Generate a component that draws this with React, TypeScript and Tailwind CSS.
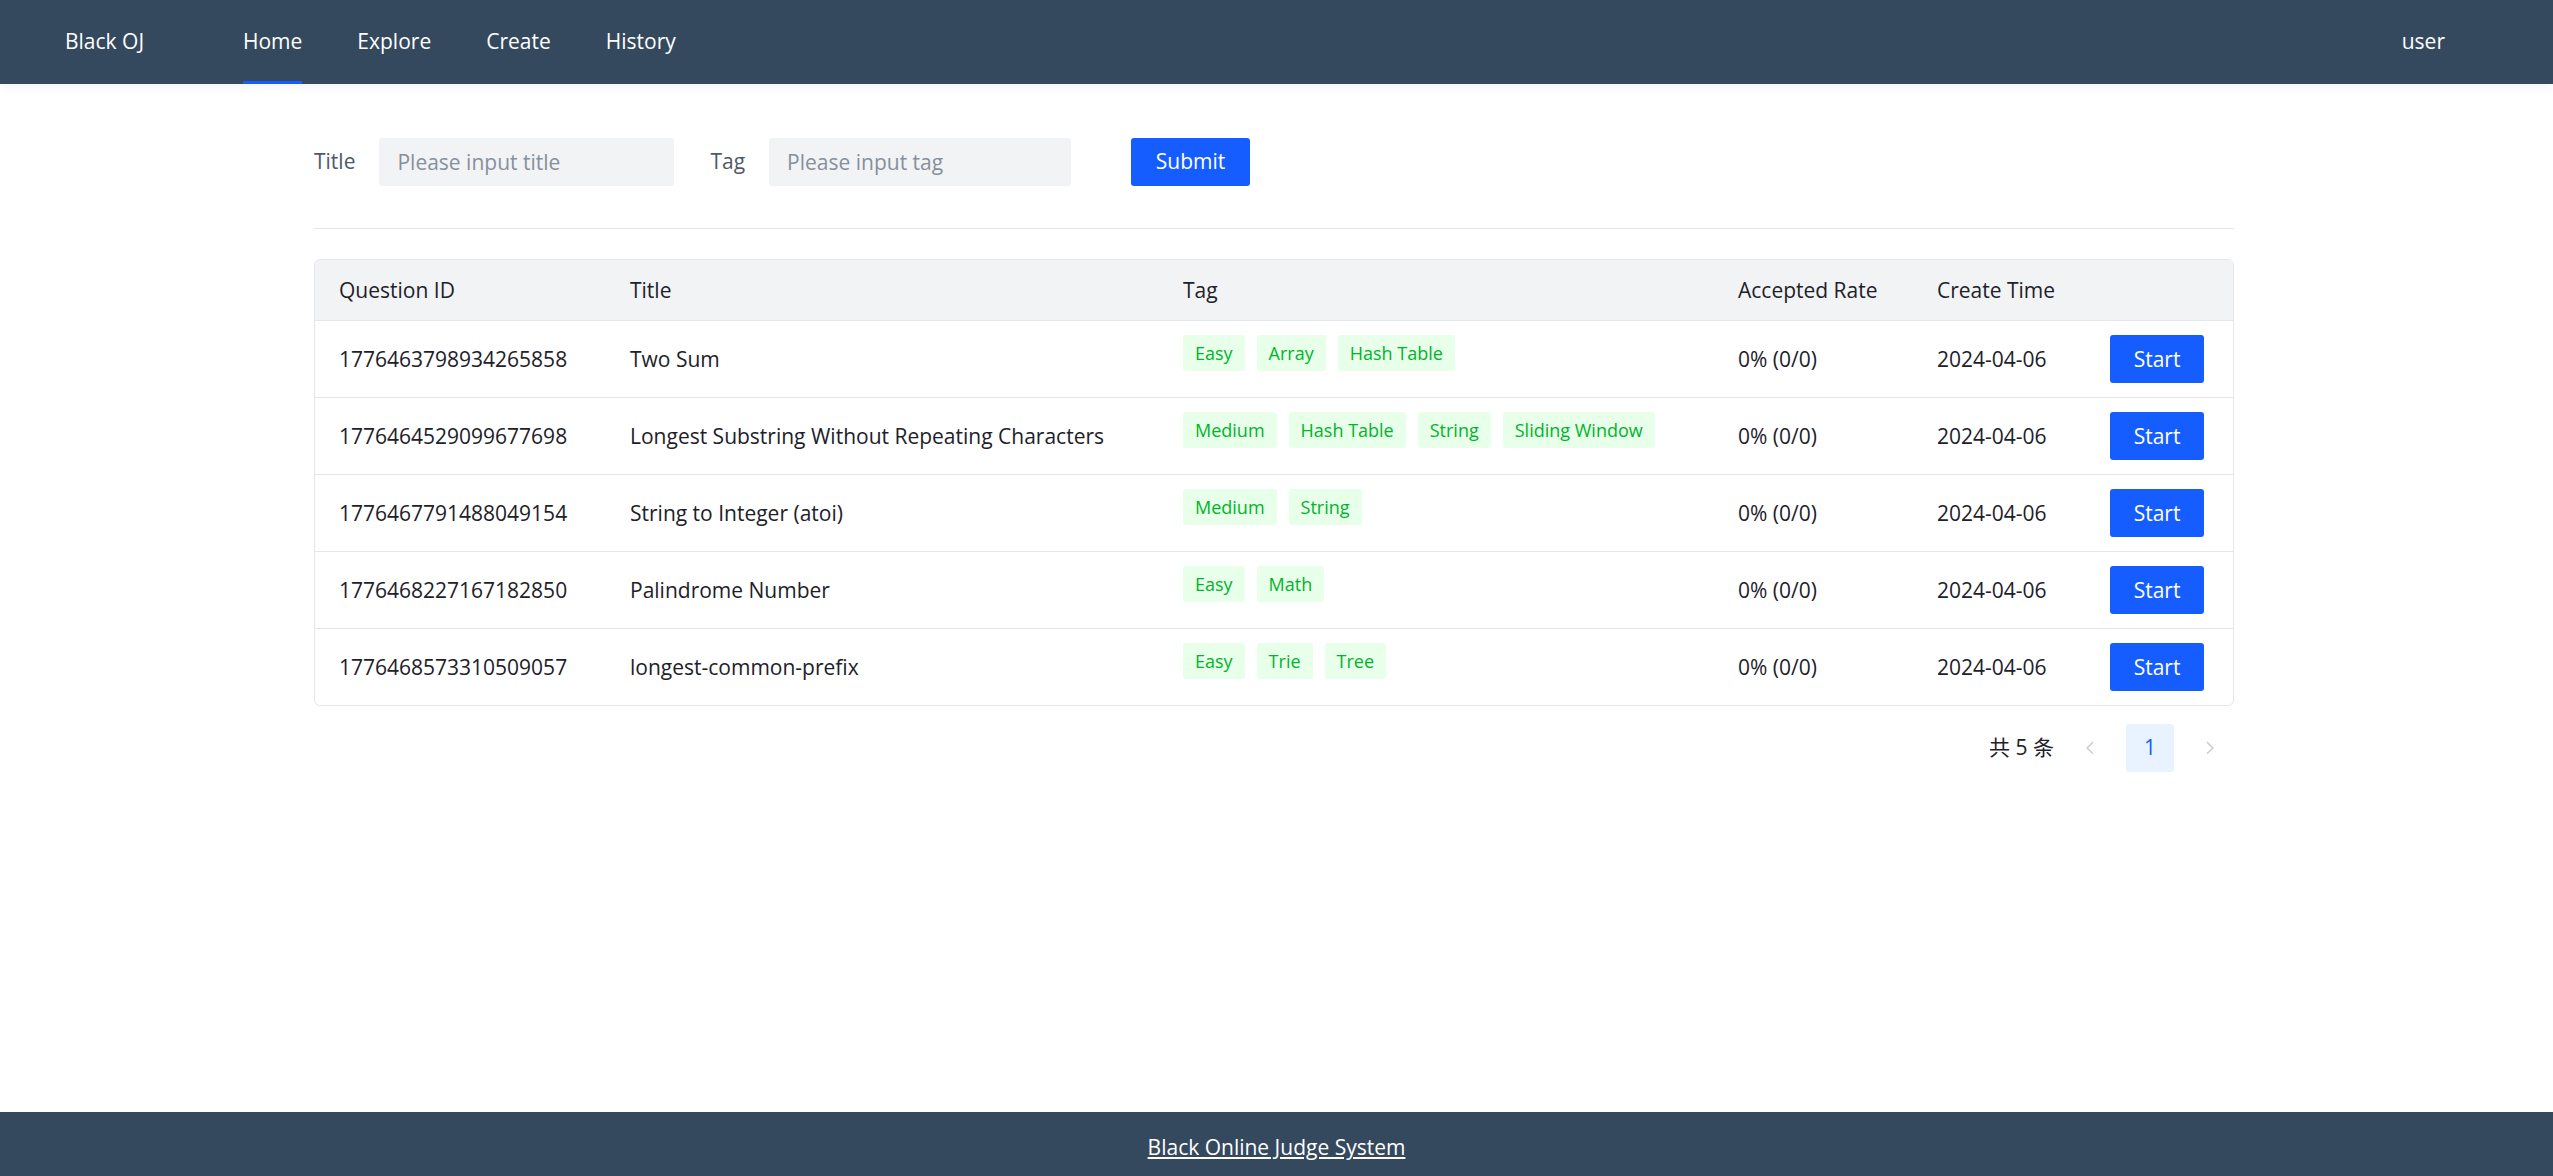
import React from "react";

const rows = [
  { id: "1776463798934265858", title: "Two Sum", tags: ["Easy", "Array", "Hash Table"] },
  {
    id: "1776464529099677698",
    title: "Longest Substring Without Repeating Characters",
    tags: ["Medium", "Hash Table", "String", "Sliding Window"],
  },
  { id: "1776467791488049154", title: "String to Integer (atoi)", tags: ["Medium", "String"] },
  { id: "1776468227167182850", title: "Palindrome Number", tags: ["Easy", "Math"] },
  { id: "1776468573310509057", title: "longest-common-prefix", tags: ["Easy", "Trie", "Tree"] },
];

const Chevron = ({ dir }: { dir: "left" | "right" }) => (
  <svg width="18" height="18" viewBox="0 0 48 48" fill="none" stroke="#c9cdd4" strokeWidth="4">
    {dir === "left" ? <path d="M32 8.4 16.444 23.956 32 39.513" /> : <path d="m16 39.513 15.556-15.557L16 8.4" />}
  </svg>
);

export default function App() {
  return (
    <div className="min-h-screen flex flex-col bg-white font-['Open_Sans','Noto_Sans_CJK_SC',sans-serif] text-[#1d2129]">
      <header className="relative z-10 h-[84px] bg-[#34495e] flex items-center text-white text-[21px] shrink-0 shadow-[0_2px_10px_rgba(0,0,0,0.06)]">
        <div className="pl-[65px] w-[243px]">Black OJ</div>
        <nav className="flex h-full gap-[55px]">
          {["Home", "Explore", "Create", "History"].map((n, i) => (
            <div
              key={n}
              className={
                "h-full flex items-center border-y-[3px] border-t-transparent " +
                (i === 0 ? "border-b-[#165dff]" : "border-b-transparent")
              }
            >
              {n}
            </div>
          ))}
        </nav>
        <div className="ml-auto pr-[108px]">user</div>
      </header>

      <main className="flex-1">
        <div className="w-[1920px] ml-[314px] pt-[54px]">
          <form className="flex items-center h-[48px] text-[21px]" onSubmit={(e) => e.preventDefault()}>
            <label className="text-[#4e5969] mr-[24px]">Title</label>
            <input
              className="w-[295px] h-[48px] bg-[#f2f3f5] rounded-[3px] px-[18px] text-[21px] outline-none placeholder:text-[#86909c]"
              placeholder="Please input title"
            />
            <label className="text-[#4e5969] ml-[36px] mr-[24px]">Tag</label>
            <input
              className="w-[302px] h-[48px] bg-[#f2f3f5] rounded-[3px] px-[18px] text-[21px] outline-none placeholder:text-[#86909c]"
              placeholder="Please input tag"
            />
            <button
              type="submit"
              className="ml-[60px] w-[119px] h-[48px] bg-[#165dff] text-white rounded-[3px] text-[21px]"
            >
              Submit
            </button>
          </form>

          <div className="mt-[42px] h-px bg-[#e5e6eb]" />

          <div className="mt-[30px] border border-[#e5e6eb] rounded-[6px] overflow-hidden">
            <table className="w-full table-fixed border-collapse text-[21px] leading-[33px]">
              <colgroup>
                <col className="w-[291px]" />
                <col className="w-[553px]" />
                <col className="w-[555px]" />
                <col className="w-[199px]" />
                <col className="w-[173px]" />
                <col />
              </colgroup>
              <thead>
                <tr className="bg-[#f2f3f5] border-b border-[#e5e6eb] text-left">
                  <th className="font-normal px-[24px] pt-[14px] pb-[13px]">Question ID</th>
                  <th className="font-normal px-[24px] pt-[14px] pb-[13px]">Title</th>
                  <th className="font-normal px-[24px] pt-[14px] pb-[13px]">Tag</th>
                  <th className="font-normal px-[24px] pt-[14px] pb-[13px]">Accepted Rate</th>
                  <th className="font-normal px-[24px] pt-[14px] pb-[13px]">Create Time</th>
                  <th className="font-normal px-[24px] pt-[14px] pb-[13px]"></th>
                </tr>
              </thead>
              <tbody>
                {rows.map((r, idx) => (
                  <tr key={r.id} className={idx < rows.length - 1 ? "border-b border-[#e5e6eb]" : ""}>
                    <td className="px-[24px] py-[14px] whitespace-nowrap">{r.id}</td>
                    <td className="px-[24px] py-[14px] whitespace-nowrap">{r.title}</td>
                    <td className="px-[24px] py-[14px]">
                      <div className="flex flex-wrap gap-x-[12px]">
                        {r.tags.map((t) => (
                          <span
                            key={t}
                            className="mb-[12px] h-[36px] px-[12px] flex items-center bg-[#e8ffea] text-[#00b42a] text-[18px] rounded-[3px]"
                          >
                            {t}
                          </span>
                        ))}
                      </div>
                    </td>
                    <td className="px-[24px] py-[14px] whitespace-nowrap">0% (0/0)</td>
                    <td className="px-[24px] py-[14px] whitespace-nowrap">2024-04-06</td>
                    <td className="px-[24px] py-[14px]">
                      <button className="w-[94px] h-[48px] bg-[#165dff] text-white rounded-[3px] text-[21px]">
                        Start
                      </button>
                    </td>
                  </tr>
                ))}
              </tbody>
            </table>
          </div>

          <div className="mt-[18px] flex items-center justify-end text-[21px]">
            <span className="mr-[12px]">共 5 条</span>
            <div className="w-[48px] h-[48px] flex items-center justify-center">
              <Chevron dir="left" />
            </div>
            <div className="ml-[12px] w-[48px] h-[48px] flex items-center justify-center bg-[#e8f3ff] text-[#165dff] rounded-[3px]">
              1
            </div>
            <div className="ml-[12px] w-[48px] h-[48px] flex items-center justify-center">
              <Chevron dir="right" />
            </div>
          </div>
        </div>
      </main>

      <footer className="h-[64px] pt-[8px] bg-[#34495e] flex items-center justify-center shrink-0">
        <a href="#" className="text-white underline text-[21px]">
          Black Online Judge System
        </a>
      </footer>
    </div>
  );
}
